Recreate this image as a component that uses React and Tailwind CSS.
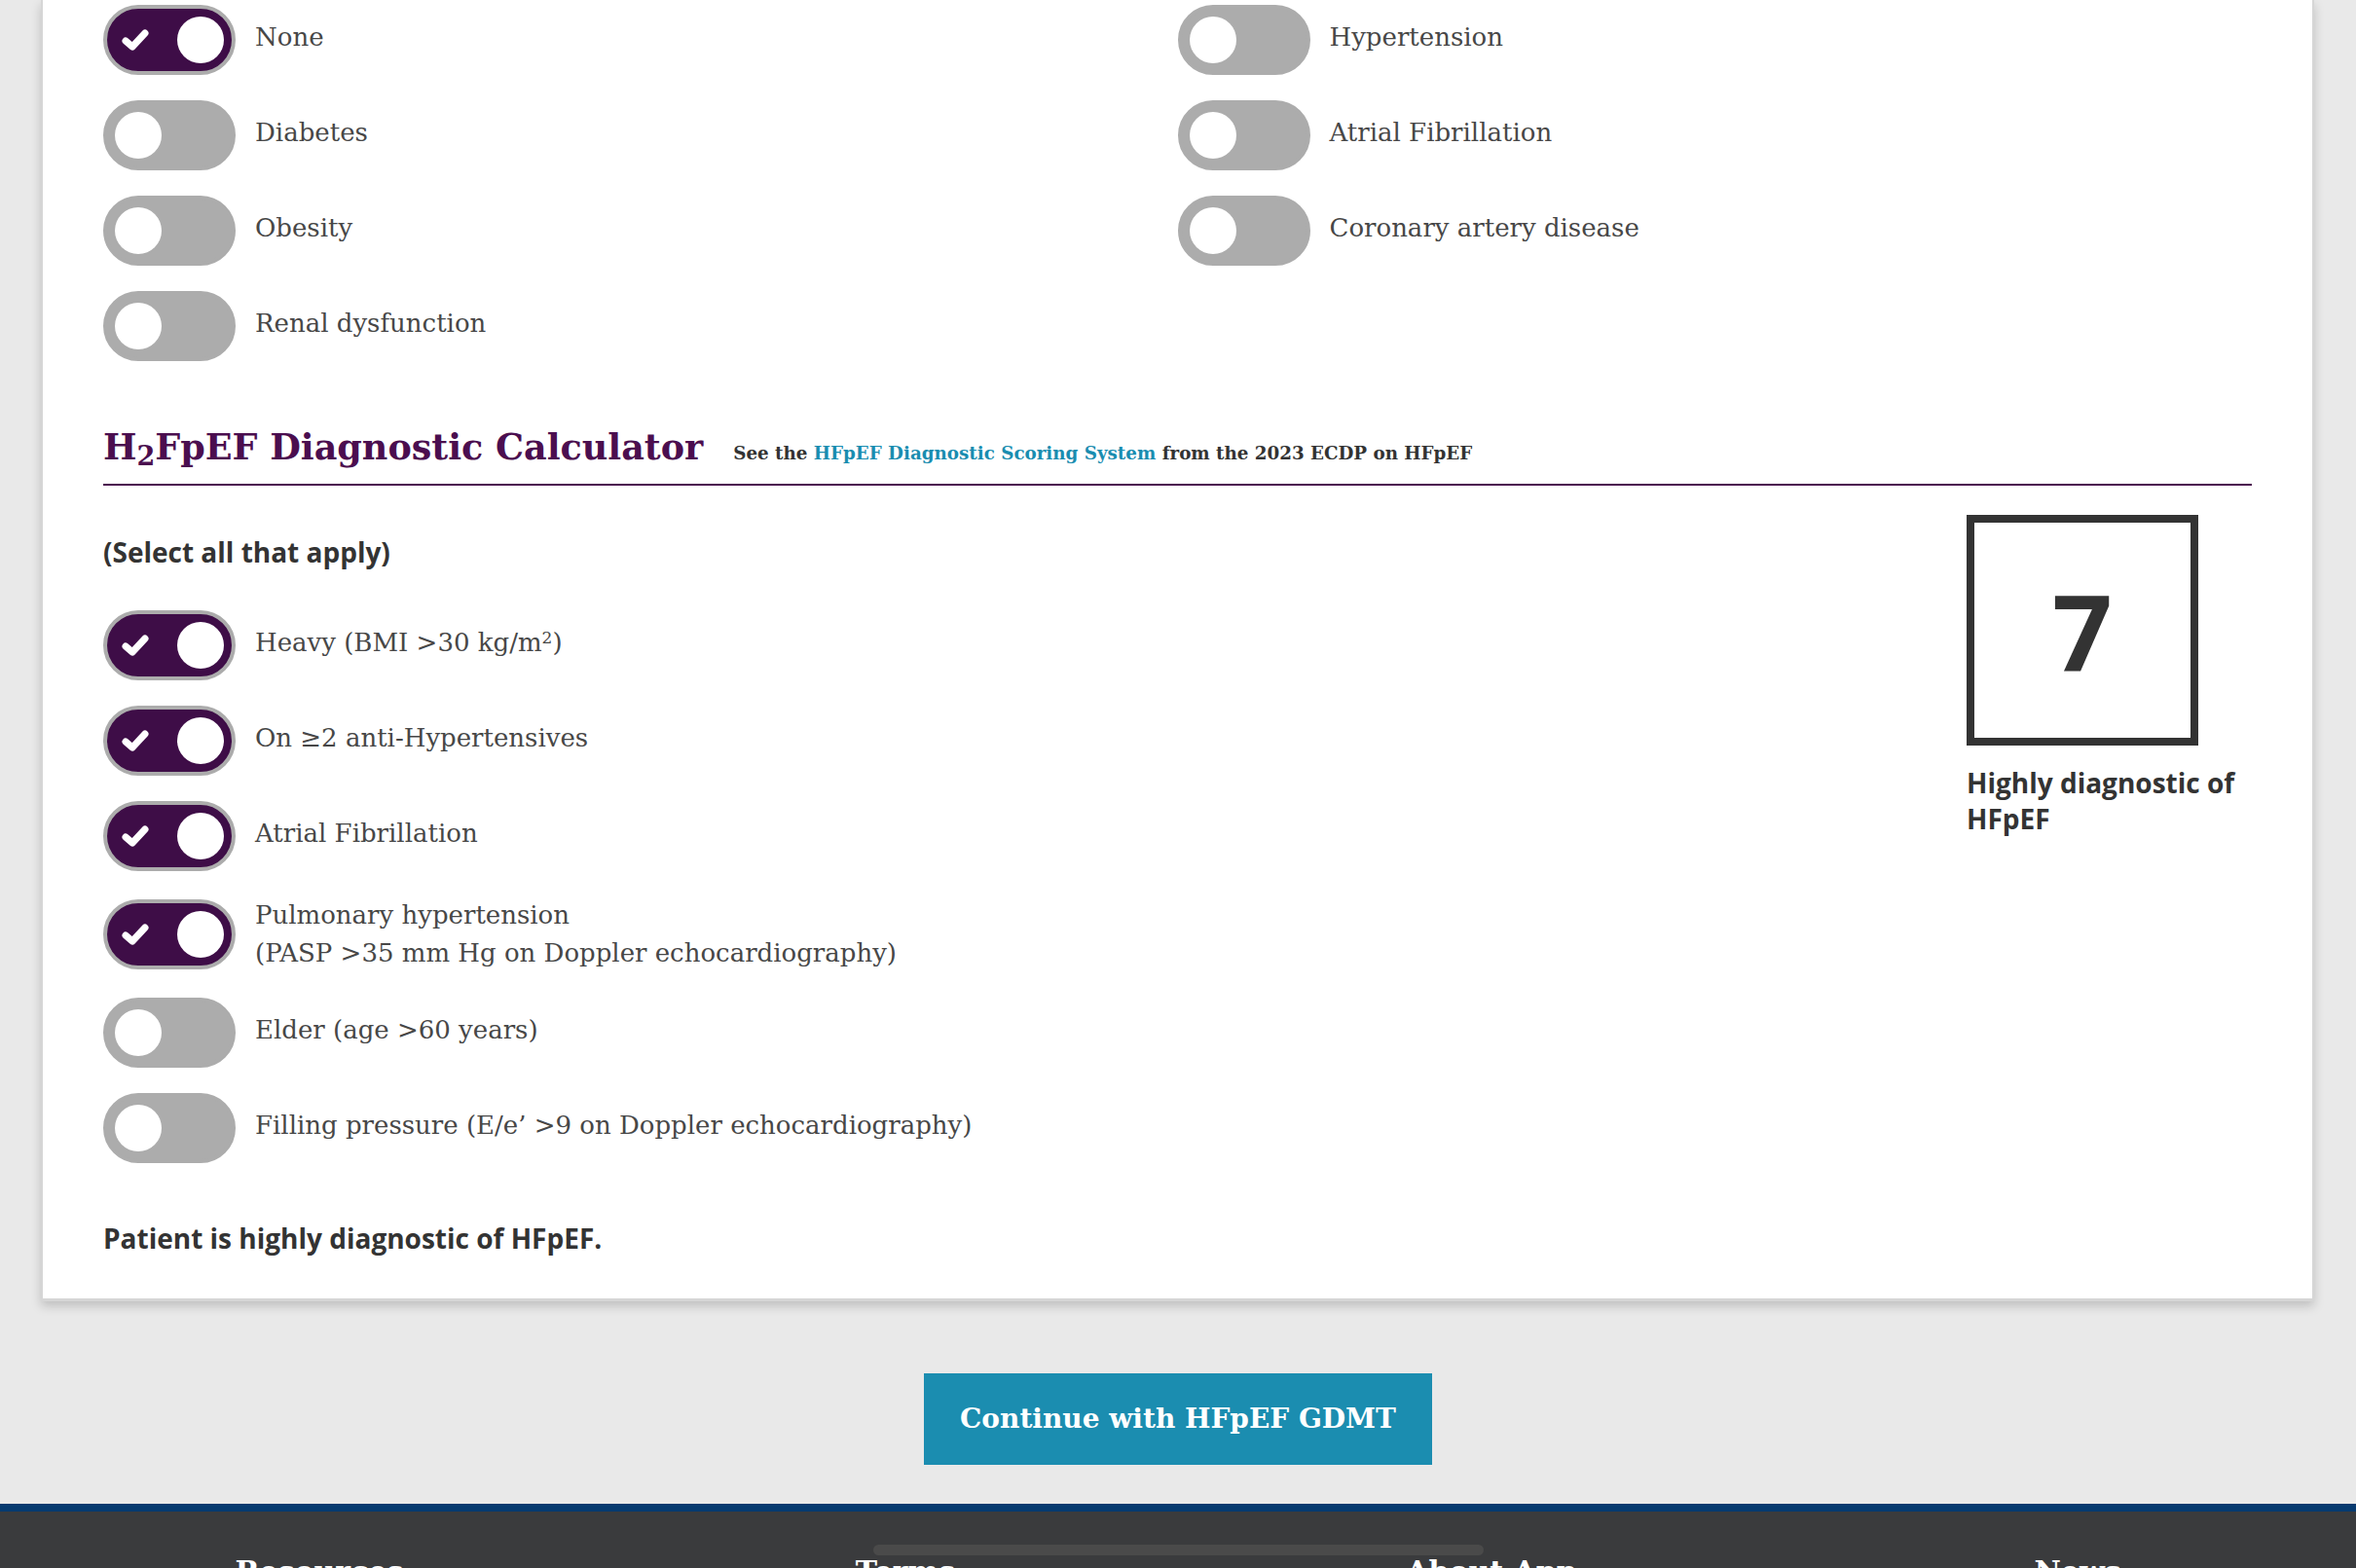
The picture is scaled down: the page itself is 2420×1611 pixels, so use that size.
import { useState } from "react";

const slab = "font-['DejaVu_Serif',serif]";
const sans = "font-['Open_Sans',sans-serif]";

function Toggle({ on, onClick }) {
    return (
        <button
            onClick={onClick}
            className={`shrink-0 w-[136px] h-[72px] rounded-full border-4 border-[#acacac] flex items-center ${on ? "bg-[#3e0d47] justify-between pl-[14px] pr-[8px]" : "bg-[#acacac] justify-start pl-[8px]"}`}
        >
            {on && (
                <svg width="30" height="24" viewBox="0 0 30 24" className="block">
                    <polyline points="5,13 12,19 25,5" fill="none" stroke="white" strokeWidth="7" strokeLinecap="round" strokeLinejoin="round" />
                </svg>
            )}
            <span className="block w-[48px] h-[48px] rounded-full bg-white" />
        </button>
    );
}

function ToggleRow({ on, onClick, multi, children }) {
    return (
        <div className="flex items-center gap-[20px]">
            <Toggle on={on} onClick={onClick} />
            <div className={`${slab} ${multi ? "" : "pb-[5px]"} text-[26px] leading-[39px] text-[#474747]`}>{children}</div>
        </div>
    );
}

function App() {
    const [history, setHistory] = useState({
        none: true,
        diabetes: false,
        obesity: false,
        renal: false,
        hypertension: false,
        afib: false,
        cad: false,
    });
    const [calc, setCalc] = useState({
        heavy: true,
        antiHyp: true,
        afib: true,
        pulm: true,
        elder: false,
        filling: false,
    });

    const flipHistory = (key) => setHistory({ ...history, [key]: !history[key] });
    const flipCalc = (key) => setCalc({ ...calc, [key]: !calc[key] });

    // H2FpEF points: heavy 2, hypertensives 1, AF 3, pulmonary HTN 1, elder 1, filling 1
    const score =
        (calc.heavy ? 2 : 0) +
        (calc.antiHyp ? 1 : 0) +
        (calc.afib ? 3 : 0) +
        (calc.pulm ? 1 : 0) +
        (calc.elder ? 1 : 0) +
        (calc.filling ? 1 : 0);

    return (
        <div className="min-h-screen bg-[#e9e9e9] flex flex-col">
            <div className="ml-[42px] mr-[43px] bg-white border-x-2 border-b-[3px] border-[#d6d6d6] shadow-[0_5px_10px_rgba(0,0,0,0.18)] px-[62px] pt-[5px] pb-[43px]">
                <div className="grid grid-cols-2">
                    <div className="flex flex-col gap-[26px]">
                        <ToggleRow on={history.none} onClick={() => flipHistory("none")}>None</ToggleRow>
                        <ToggleRow on={history.diabetes} onClick={() => flipHistory("diabetes")}>Diabetes</ToggleRow>
                        <ToggleRow on={history.obesity} onClick={() => flipHistory("obesity")}>Obesity</ToggleRow>
                        <ToggleRow on={history.renal} onClick={() => flipHistory("renal")}>Renal dysfunction</ToggleRow>
                    </div>
                    <div className="flex flex-col gap-[26px]">
                        <ToggleRow on={history.hypertension} onClick={() => flipHistory("hypertension")}>Hypertension</ToggleRow>
                        <ToggleRow on={history.afib} onClick={() => flipHistory("afib")}>Atrial Fibrillation</ToggleRow>
                        <ToggleRow on={history.cad} onClick={() => flipHistory("cad")}>Coronary artery disease</ToggleRow>
                    </div>
                </div>

                <div className="mt-[66px] pb-[14px] border-b-2 border-[#4b0e4f] flex items-baseline gap-[31px]">
                    <h2 className={`${slab} font-bold text-[36.5px] leading-[46px] text-[#4b0e4f]`}>
                        H<sub className="text-[27px] relative top-[6px] align-baseline">2</sub>FpEF Diagnostic Calculator
                    </h2>
                    <p className={`${slab} font-bold text-[18.3px] text-[#333]`}>
                        See the <a href="#" className="text-[#1a8db0]">HFpEF Diagnostic Scoring System</a> from the 2023 ECDP on HFpEF
                    </p>
                </div>

                <div className="flex">
                    <div className="flex-1 pt-[49px]">
                        <p className={`${sans} font-bold text-[28px] leading-[38px] text-[#333]`}>(Select all that apply)</p>
                        <div className="mt-[41px] flex flex-col gap-[26px]">
                            <ToggleRow on={calc.heavy} onClick={() => flipCalc("heavy")}>
                                Heavy (BMI &gt;30 kg/m<sup className="text-[17px]">2</sup>)
                            </ToggleRow>
                            <ToggleRow on={calc.antiHyp} onClick={() => flipCalc("antiHyp")}>On ≥2 anti-Hypertensives</ToggleRow>
                            <ToggleRow on={calc.afib} onClick={() => flipCalc("afib")}>Atrial Fibrillation</ToggleRow>
                            <ToggleRow on={calc.pulm} onClick={() => flipCalc("pulm")} multi>
                                Pulmonary hypertension
                                <br />
                                (PASP &gt;35 mm Hg on Doppler echocardiography)
                            </ToggleRow>
                            <ToggleRow on={calc.elder} onClick={() => flipCalc("elder")}>Elder (age &gt;60 years)</ToggleRow>
                            <ToggleRow on={calc.filling} onClick={() => flipCalc("filling")}>
                                Filling pressure (E/e’ &gt;9 on Doppler echocardiography)
                            </ToggleRow>
                        </div>
                        <p className={`${sans} mt-[58px] font-bold text-[28px] leading-[38px] text-[#333]`}>
                            Patient is highly diagnostic of HFpEF.
                        </p>
                    </div>
                    <div className="w-[293px] pt-[30px]">
                        <div className="w-[238px] h-[237px] border-8 border-[#333] flex items-center justify-center">
                            <span className={`${sans} font-bold text-[108px] leading-none text-[#333]`}>{score}</span>
                        </div>
                        <p className={`${sans} mt-[20px] font-bold text-[28px] leading-[37px] text-[#333]`}>
                            Highly diagnostic of HFpEF
                        </p>
                    </div>
                </div>
            </div>

            <div className="mt-[74px] flex justify-center">
                <button className={`${slab} w-[522px] h-[94px] bg-[#1b8db0] text-white font-bold text-[28px]`}>
                    Continue with HFpEF GDMT
                </button>
            </div>

            <footer className="mt-[40px] h-[68px] overflow-hidden border-t-8 border-[#063a6f] bg-[#3a3b3d]">
                <div className="mt-[34px] mx-auto w-[627px] h-[11px] rounded-full bg-[#4a4a4a]" />
                <div className="mt-[2px] ml-[27px] w-[2408px] grid grid-cols-4 text-center">
                    <h3 className={`${slab} font-bold text-[30px] leading-none text-white`}>Resources</h3>
                    <h3 className={`${slab} font-bold text-[30px] leading-none text-white`}>Terms</h3>
                    <h3 className={`${slab} font-bold text-[30px] leading-none text-white`}>About App</h3>
                    <h3 className={`${slab} font-bold text-[30px] leading-none text-white`}>News</h3>
                </div>
            </footer>
        </div>
    );
}

export default App
